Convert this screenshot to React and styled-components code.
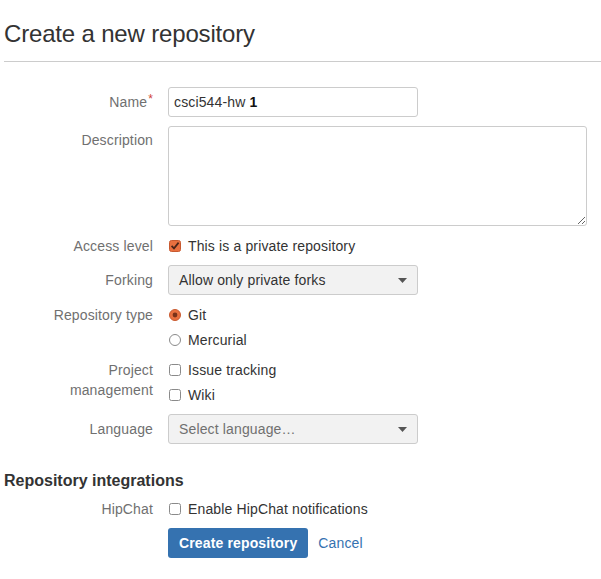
import React from "react";
import styled, { createGlobalStyle } from "styled-components";

const GlobalStyle = createGlobalStyle`
  body {
    margin: 0;
    background: #fff;
    font-family: "Liberation Sans", Arial, sans-serif;
    color: #333;
    letter-spacing: 0.14px;
  }
`;

const Page = styled.div`
  padding: 20px 0 0 4px;
`;

const Title = styled.h1`
  margin: 0;
  font-size: 24px;
  line-height: 28px;
  font-weight: normal;
  letter-spacing: -0.17px;
  color: #333;
`;

const Rule = styled.hr`
  margin: 13px 0 0 0;
  border: none;
  border-top: 1px solid #ccc;
  height: 0;
`;

const Form = styled.div`
  display: flex;
  flex-direction: column;
  gap: 9px;
  margin-top: 25px;
`;

const Row = styled.div`
  display: grid;
  grid-template-columns: 149px 419px;
  column-gap: 15px;
  align-items: start;
`;

const Label = styled.div`
  text-align: right;
  font-size: 14px;
  line-height: 20px;
  color: #707070;
  padding-top: ${(p) => p.$top ?? 5}px;
`;

const Req = styled.span`
  color: #d04437;
  font-size: 12px;
  vertical-align: top;
  position: relative;
  top: -3px;
  margin-left: 1px;
`;

const TextInput = styled.div`
  box-sizing: border-box;
  width: 250px;
  height: 30px;
  border: 1px solid #ccc;
  border-radius: 3px;
  padding: 0 5px;
  font-size: 14px;
  line-height: 28px;
  color: #333;
  b { color: #111; }
`;

const TextArea = styled.textarea`
  box-sizing: border-box;
  width: 419px;
  height: 100px;
  border: 1px solid #ccc;
  border-radius: 3px;
  margin: 0;
  padding: 4px 5px;
  font-family: "Liberation Sans", Arial, sans-serif;
  font-size: 14px;
  display: block;
  resize: vertical;
  outline: none;
`;

const Select = styled.div`
  box-sizing: border-box;
  width: 250px;
  height: 30px;
  border: 1px solid #ccc;
  border-radius: 3px;
  background: #f2f2f2;
  padding: 0 10px;
  display: flex;
  align-items: center;
  justify-content: space-between;
  font-size: 14px;
  color: ${(p) => (p.$placeholder ? "#707070" : "#333")};
`;

const Options = styled.div`
  display: flex;
  flex-direction: column;
  gap: ${(p) => p.$gap ?? 4}px;
`;

const Option = styled.label`
  display: flex;
  align-items: center;
  gap: 7px;
  padding-left: 1px;
  height: 21px;
  font-size: 14px;
  color: #333;
`;

const Heading = styled.h2`
  margin: 18px 0 -2px 0;
  font-size: 16px;
  line-height: 20px;
  font-weight: bold;
  letter-spacing: 0;
  color: #333;
`;

const Actions = styled.div`
  display: flex;
  align-items: center;
  gap: 10px;
`;

const Button = styled.button`
  height: 30px;
  padding: 0 11px;
  border: none;
  border-radius: 3px;
  background: #3572b0;
  color: #fff;
  font-family: "Liberation Sans", Arial, sans-serif;
  font-size: 14px;
  font-weight: bold;
  letter-spacing: 0.14px;
`;

const CancelLink = styled.a`
  color: #3572b0;
  font-size: 14px;
  text-decoration: none;
`;

function CheckIcon({ checked }) {
  return (
    <svg width="12" height="12" viewBox="0 0 12 12">
      <rect
        x="0.5"
        y="0.5"
        width="11"
        height="11"
        rx="2"
        fill={checked ? "#e9703f" : "#fff"}
        stroke={checked ? "#c85a30" : "#8a8a8a"}
      />
      {checked && (
        <path d="M2.6 5.8 L5 8.4 L9.6 2.6" fill="none" stroke="#4a2418" strokeWidth="1.7" />
      )}
    </svg>
  );
}

function RadioIcon({ checked }) {
  return (
    <svg width="12" height="12" viewBox="0 0 12 12">
      <circle
        cx="6"
        cy="6"
        r="5.5"
        fill={checked ? "#e9703f" : "#fff"}
        stroke={checked ? "#c85a30" : "#8a8a8a"}
      />
      {checked && <circle cx="6" cy="6" r="2.4" fill="#7a3219" />}
    </svg>
  );
}

function Caret() {
  return (
    <svg width="9" height="5" viewBox="0 0 9 5">
      <polygon points="0,0 9,0 4.5,5" fill="#555" />
    </svg>
  );
}

export default function App() {
  return (
    <Page>
      <GlobalStyle />
      <Title>Create a new repository</Title>
      <Rule />
      <Form>
        <Row>
          <Label>
            Name<Req>*</Req>
          </Label>
          <TextInput>
            csci544-hw <b>1</b>
          </TextInput>
        </Row>
        <Row>
          <Label $top={4}>Description</Label>
          <TextArea />
        </Row>
        <Row>
          <Label $top={1}>Access level</Label>
          <Option>
            <CheckIcon checked />
            This is a private repository
          </Option>
        </Row>
        <Row>
          <Label>Forking</Label>
          <Select>
            Allow only private forks
            <Caret />
          </Select>
        </Row>
        <Row>
          <Label $top={1}>Repository type</Label>
          <Options>
            <Option>
              <RadioIcon checked />
              Git
            </Option>
            <Option>
              <RadioIcon />
              Mercurial
            </Option>
          </Options>
        </Row>
        <Row>
          <Label $top={1}>
            Project
            <br />
            management
          </Label>
          <Options $gap={4}>
            <Option>
              <CheckIcon />
              Issue tracking
            </Option>
            <Option>
              <CheckIcon />
              Wiki
            </Option>
          </Options>
        </Row>
        <Row>
          <Label>Language</Label>
          <Select $placeholder>
            Select language…
            <Caret />
          </Select>
        </Row>
        <Heading>Repository integrations</Heading>
        <Row>
          <Label $top={1}>HipChat</Label>
          <Option>
            <CheckIcon />
            Enable HipChat notifications
          </Option>
        </Row>
        <Row>
          <div />
          <Actions>
            <Button>Create repository</Button>
            <CancelLink href="#">Cancel</CancelLink>
          </Actions>
        </Row>
      </Form>
    </Page>
  );
}
